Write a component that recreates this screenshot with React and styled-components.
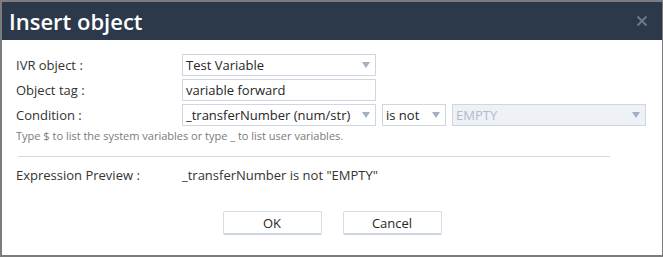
import React from 'react';
import styled, { createGlobalStyle } from 'styled-components';

const GlobalStyle = createGlobalStyle`
  html, body {
    margin: 0;
    padding: 0;
    background: #ffffff;
  }
  body {
    font-family: "Open Sans", "Liberation Sans", Arial, sans-serif;
  }
`;

const Dialog = styled.div`
  width: 663px;
  height: 257px;
  box-sizing: border-box;
  border-style: solid;
  border-color: #7c7c7c;
  border-width: 2px 1px 2px 2px;
  background: #ffffff;
  display: flex;
  flex-direction: column;
`;

const Header = styled.div`
  height: 38px;
  background: #2b394a;
  display: flex;
  align-items: center;
  justify-content: space-between;
  padding: 0 14px 0 7px;
  flex-shrink: 0;
`;

const Title = styled.h1`
  margin: 0;
  color: #ffffff;
  font-size: 22px;
  font-weight: 600;
  line-height: 1;
`;

const Close = styled.button`
  border: 0;
  background: none;
  padding: 0;
  width: 12px;
  height: 12px;
  display: flex;
  cursor: pointer;
`;

const Body = styled.div`
  padding: 14px 14px 0 14px;
  display: flex;
  flex-direction: column;
`;

const Form = styled.div`
  display: grid;
  grid-template-columns: 166px 1fr;
  row-gap: 3px;
  align-items: center;
`;

const Label = styled.label`
  font-size: 13px;
  color: #333333;
  line-height: 22px;
`;

const Controls = styled.div`
  display: flex;
  gap: 6px;
`;

const Field = styled.div`
  width: ${(p) => p.$width}px;
  height: 22px;
  box-sizing: border-box;
  border: 1px solid #cdd6e2;
  background: ${(p) => (p.$disabled ? '#eef1f6' : '#ffffff')};
  color: ${(p) => (p.$disabled ? '#b3bccb' : '#262626')};
  font-size: 13px;
  padding: 0 5px 0 3px;
  display: flex;
  align-items: center;
  justify-content: space-between;
  white-space: nowrap;
`;

const Arrow = styled.span`
  width: 0;
  height: 0;
  border-left: 4.5px solid transparent;
  border-right: 4.5px solid transparent;
  border-top: 6px solid #a3b0c4;
  flex-shrink: 0;
`;

const Hint = styled.div`
  margin-top: 2px;
  font-size: 11px;
  line-height: 15px;
  color: #7a7a7a;
`;

const Divider = styled.hr`
  width: 592px;
  margin: 13px 0 0 2px;
  border: 0;
  border-top: 1px solid #cfd7e2;
  height: 0;
`;

const Preview = styled.div`
  margin-top: 9px;
  display: grid;
  grid-template-columns: 166px 1fr;
  font-size: 13px;
  line-height: 18px;
  color: #333333;
`;

const Actions = styled.div`
  margin-top: 27px;
  display: flex;
  justify-content: center;
  gap: 21px;
`;

const Button = styled.button`
  width: 99px;
  height: 24px;
  box-sizing: border-box;
  background: #ffffff;
  border: 1px solid #d3dbe6;
  border-bottom: 2px solid #cbd4e1;
  border-radius: 2px;
  font-family: inherit;
  font-size: 13px;
  color: #262626;
  padding: 0;
  cursor: pointer;
`;

function Select({ value, width, disabled }) {
  return (
    <Field $width={width} $disabled={disabled}>
      <span>{value}</span>
      <Arrow />
    </Field>
  );
}

export default function App() {
  return (
    <>
      <GlobalStyle />
      <Dialog>
        <Header>
          <Title>Insert object</Title>
          <Close aria-label="Close">
            <svg width="12" height="12" viewBox="0 0 12 12">
              <path d="M1.5 1.5 L10.5 10.5 M10.5 1.5 L1.5 10.5" stroke="#6b7a8e" strokeWidth="1.8" />
            </svg>
          </Close>
        </Header>
        <Body>
          <Form>
            <Label>IVR object :</Label>
            <Select value="Test Variable" width={194} />
            <Label>Object tag :</Label>
            <Field $width={194}>variable forward</Field>
            <Label>Condition :</Label>
            <Controls>
              <Select value="_transferNumber (num/str)" width={194} />
              <Select value="is not" width={64} />
              <Select value="EMPTY" width={194} disabled />
            </Controls>
          </Form>
          <Hint>Type $ to list the system variables or type _ to list user variables.</Hint>
          <Divider />
          <Preview>
            <span>Expression Preview :</span>
            <span>_transferNumber is not "EMPTY"</span>
          </Preview>
          <Actions>
            <Button>OK</Button>
            <Button>Cancel</Button>
          </Actions>
        </Body>
      </Dialog>
    </>
  );
}
